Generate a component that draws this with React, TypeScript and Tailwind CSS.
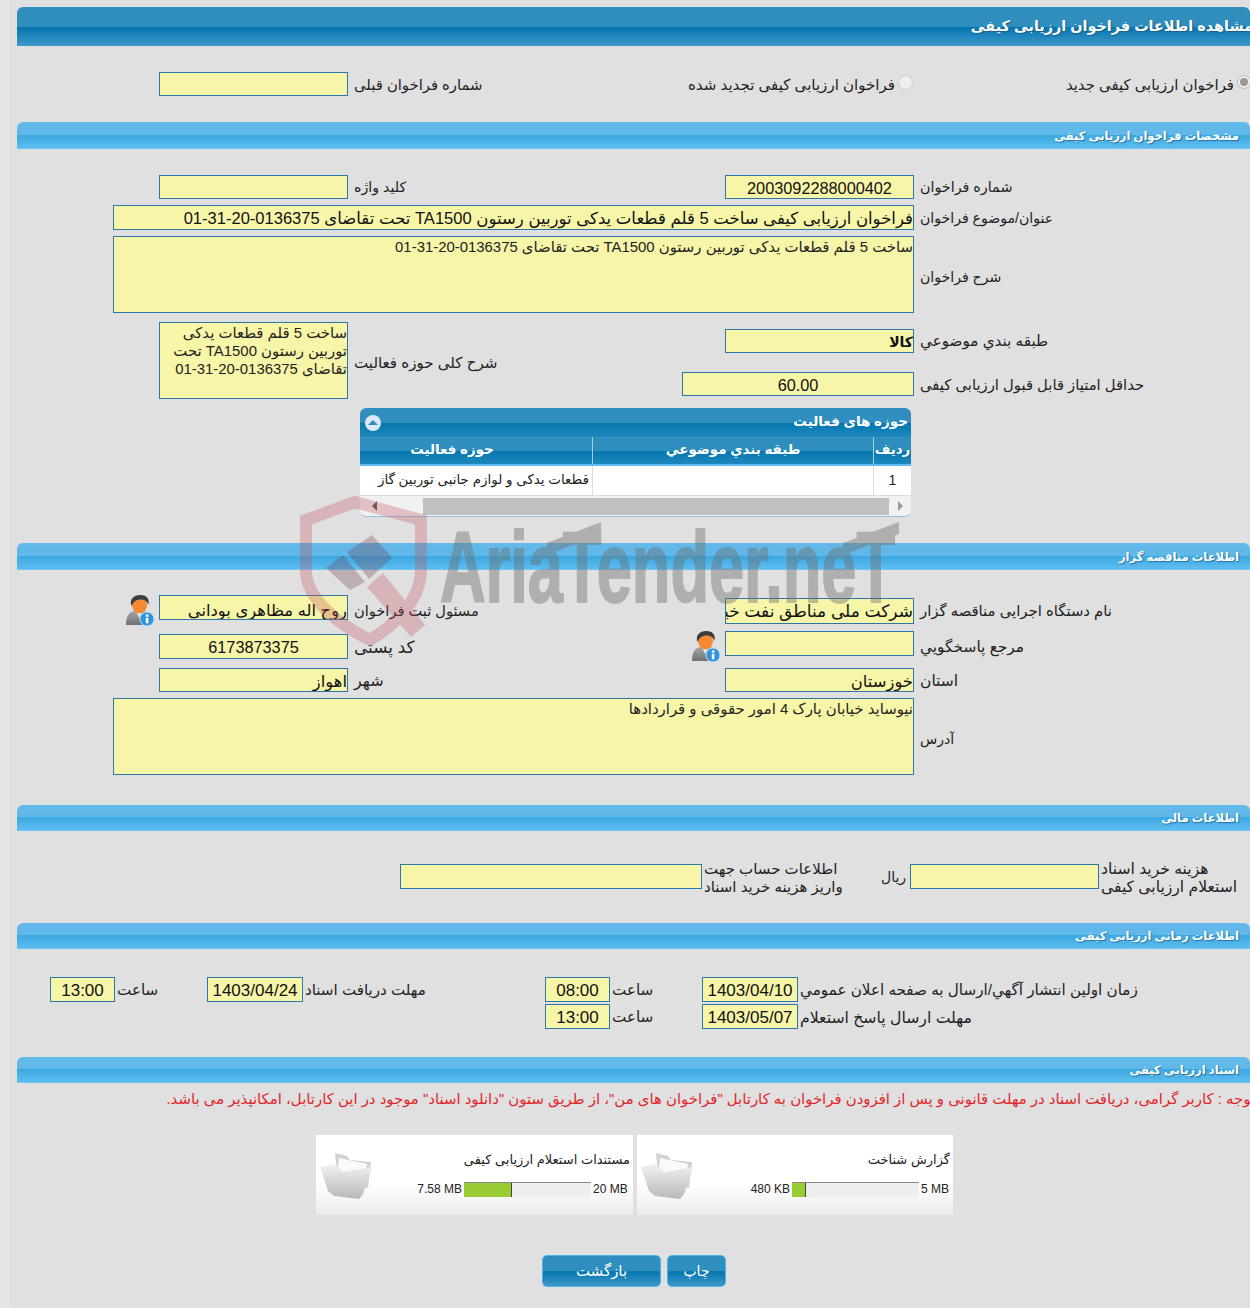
import React from "react";

const font = "font-['Liberation_Sans','DejaVu_Sans',sans-serif]";

function Bar({ title, className }: { title: string; className: string }) {
  return (
    <div
      dir="rtl"
      className={`ml-[17px] flex items-center rounded-t-[6px] bg-[linear-gradient(to_bottom,#63b9e9_0%,#60b8e8_48%,#3aa8e1_50%,#5fbdf0_100%)] border-b border-[#6fc6f2] pr-[11px] pt-[3px] text-[11.5px] font-bold text-white [text-shadow:1px_1px_1px_#27719c] ${className}`}
    >
      {title}
    </div>
  );
}

function Box({ className = "", children, center }: { className?: string; children?: React.ReactNode; center?: boolean }) {
  return (
    <div
      dir="rtl"
      className={`shrink-0 overflow-hidden whitespace-nowrap border border-[#2a77a8] bg-[#f7f5a8] leading-[24px] text-[#111] ${center ? "text-center" : "text-right"} ${className}`}
    >
      {children}
    </div>
  );
}

function Area({ className = "", children }: { className?: string; children?: React.ReactNode }) {
  return (
    <div
      dir="rtl"
      className={`shrink-0 overflow-hidden border border-[#2a77a8] bg-[#f7f5a8] pt-[1px] text-right text-[14.9px] leading-[18px] text-[#222] ${className}`}
    >
      {children}
    </div>
  );
}

function Lbl({ className = "", children }: { className?: string; children: React.ReactNode }) {
  return (
    <div dir="rtl" className={`shrink-0 whitespace-nowrap pt-[2px] text-left text-[#222] ${className}`}>
      {children}
    </div>
  );
}

function Person() {
  return (
    <svg width="30" height="31" viewBox="0 0 30 31" className="shrink-0">
      <defs>
        <linearGradient id="suit" x1="0" y1="0" x2="0" y2="1">
          <stop offset="0" stopColor="#a5a7a9" />
          <stop offset="1" stopColor="#6f7173" />
        </linearGradient>
      </defs>
      <path d="M0 30c0-9 3-13 8-14h10c5 1 8 5 8 14z" fill="url(#suit)" />
      <path d="M10 16l3 7 4-7z" fill="#ececec" />
      <ellipse cx="13.5" cy="10" rx="7.5" ry="8.5" fill="#f58a32" />
      <path d="M5.500 11C3 4 8 0 14 0s10 3 8.500 10c-1.500-4-4-5.500-8-5.500-4 0-7 2-9 6.500z" fill="#3a3d40" />
      <circle cx="21" cy="24" r="7" fill="#2f93dd" stroke="#bfe0f8" />
      <rect x="19.800" y="22.800" width="2.600" height="5.500" fill="#fff" />
      <rect x="19.800" y="19.400" width="2.600" height="2.400" fill="#fff" />
    </svg>
  );
}

function Folder({ id }: { id: string }) {
  return (
    <svg width="54" height="48" viewBox="0 0 54 48" className="shrink-0">
      <defs>
        <linearGradient id={id} x1="0" y1="0" x2="0" y2="1">
          <stop offset="0" stopColor="#f2f2f2" />
          <stop offset="1" stopColor="#b8b8b8" />
        </linearGradient>
      </defs>
      <path d="M16 1l12 3 3 4 21 2-3 26-30-5z" fill="#d2d2d2" />
      <path d="M20 6l28 6-3 21-27-6z" fill="#fafafa" />
      <path d="M1 15l15-3 8 8 18-3 11-2-9 27-4 5-25-3-6-5z" fill={`url(#${id})`} />
    </svg>
  );
}

function Card({ id, title, used, max, pct, className, maxW }: { id: string; title: string; used: string; max: string; pct: string; className: string; maxW: string }) {
  return (
    <div className={`flex h-[80px] shrink-0 items-center bg-[linear-gradient(to_bottom,#ffffff_60%,#ececec_100%)] ${className}`}>
      <div className="ml-[3px] mt-[2px]">
        <Folder id={id} />
      </div>
      <div className="ml-[2px] mb-[4px] flex flex-1 flex-col">
        <div dir="rtl" className="pr-[3px] pt-[1px] text-[13px] leading-[18px] text-[#222]">
          {title}
        </div>
        <div className="mt-[13px] flex h-[15px] items-center text-[12px] text-[#222]">
          <div className="flex-1 whitespace-nowrap pr-[2px] text-right">{used}</div>
          <div className="h-[15px] w-[127px] shrink-0 border-t border-[#888] bg-[#eeeeee]">
            <div className={`h-full border-r border-[#444] bg-[#99cc33] ${pct}`} />
          </div>
          <div className={`shrink-0 whitespace-nowrap pl-[2px] ${maxW}`}>{max}</div>
        </div>
      </div>
    </div>
  );
}

function Watermark() {
  return (
    <svg width="620" height="150" viewBox="0 0 620 150" className="pointer-events-none absolute left-[295px] top-[495px]">
      <g opacity="0.3">
        <path
          d="M11 25L60 7l66 18v50c0 30-26 55-51 70C45 130 11 105 11 75z"
          fill="none"
          stroke="#c0505a"
          strokeWidth="12"
        />
        <path d="M31 73l17-13 22 27-15 8z" fill="#6f3c50" />
        <path d="M52 57l25-17 20 23-23 21z" fill="#6f3c50" />
        <path d="M72 92l16-14 42 52-14 12z" fill="#c0505a" />
      </g>
      <g opacity="0.42" fill="#6e6e6e" stroke="#6e6e6e">
        <text
          x="145"
          y="107"
          fontFamily="Liberation Sans, sans-serif"
          fontWeight="700"
          fontSize="100"
          strokeWidth="2"
          textLength="455"
          lengthAdjust="spacingAndGlyphs"
        >
          AriaTender.neT
        </text>
        <path d="M252 48l54-21v12l-54 21z" strokeWidth="0" />
        <path d="M548 48l56-21v12l-56 21z" strokeWidth="0" />
      </g>
    </svg>
  );
}

const headGrad =
  "bg-[linear-gradient(to_bottom,#318fbf_0%,#2e8ebe_50%,#0476b0_52%,#1f88bc_100%)]";
const titleGrad =
  "bg-[linear-gradient(to_bottom,#318fbf_0%,#2e8ebe_50%,#0476b0_52%,#3e98c8_100%)]";

export default function App() {
  return (
    <div className={`relative h-[1308px] w-[1250px] overflow-hidden bg-[linear-gradient(to_right,#e5e5e5_10px,#e0e0e0_10px)] pt-[7px] ${font}`}>
      <div
        dir="rtl"
        className={`ml-[17px] flex h-[39px] items-center overflow-hidden rounded-t-[6px] ${titleGrad} text-[14.4px] font-bold text-white [text-shadow:1px_1px_1px_#1c5f86]`}
      >
        <span className="mr-[-3px] whitespace-nowrap">مشاهده اطلاعات فراخوان ارزیابی کیفی</span>
      </div>

      <div className="mt-[26px] flex h-[24px] items-center">
        <Box className="ml-[159px] h-[24px] w-[189px]" />
        <Lbl className="ml-[6px] w-[334px] text-[14.8px]">شماره فراخوان قبلی</Lbl>
        <Lbl className="w-[207px] text-[15.05px]">فراخوان ارزیابی کیفی تجدید شده</Lbl>
        <div className="ml-[3px] mb-[4px] h-[15px] w-[15px] shrink-0 rounded-full border border-[#ccc] bg-[#eee]" />
        <Lbl className="ml-[153px] w-[168px] text-[14.9px]">فراخوان ارزیابی کیفی جدید</Lbl>
        <div className="ml-[3px] mb-[4px] flex h-[14px] w-[14px] shrink-0 items-center justify-center rounded-full border border-[#bbb] bg-[#eee]">
          <div className="h-[8px] w-[8px] rounded-full bg-[#999]" />
        </div>
      </div>

      <Bar title="مشخصات فراخوان ارزیابی کیفی" className="mt-[26px] h-[27px]" />

      <div className="mt-[26px] flex h-[24px] items-center">
        <Box className="ml-[159px] h-[24px] w-[189px]" />
        <Lbl className="ml-[6px] w-[371px] text-[14.2px]">کلید واژه</Lbl>
        <Box center className="h-[24px] w-[189px] text-[16.3px]">2003092288000402</Box>
        <Lbl className="ml-[6px] text-[14.3px]">شماره فراخوان</Lbl>
      </div>
      <div className="mt-[6px] flex h-[25px] items-center">
        <Box className="ml-[113px] h-[25px] w-[801px] pt-[1px] text-[16.55px]">
          فراخوان ارزیابی کیفی ساخت 5 قلم قطعات یدکی توربین رستون TA1500 تحت تقاضای 0136375-20-31-01
        </Box>
        <Lbl className="ml-[6px] text-[14.1px]">عنوان/موضوع فراخوان</Lbl>
      </div>
      <div className="mt-[6px] flex h-[77px] items-center">
        <Area className="ml-[113px] h-[77px] w-[801px]">
          ساخت 5 قلم قطعات یدکی توربین رستون TA1500 تحت تقاضای 0136375-20-31-01
        </Area>
        <Lbl className="ml-[6px] mt-[4px] text-[14.1px]">شرح فراخوان</Lbl>
      </div>
      <div className="mt-[9px] flex h-[77px] items-start">
        <Area className="ml-[159px] h-[77px] w-[189px]">
          ساخت 5 قلم قطعات یدکی توربین رستون TA1500 تحت تقاضای 0136375-20-31-01
        </Area>
        <Lbl className="ml-[6px] mt-[28px] w-[328px] text-[15.1px]">شرح کلی حوزه فعالیت</Lbl>
        <div className="flex flex-col">
          <div className="mt-[7px] flex h-[24px] items-center">
            <div className="w-[43px] shrink-0" />
            <Box className="h-[24px] w-[189px] text-[14px] font-bold">کالا</Box>
            <Lbl className="ml-[6px] mb-[2px] text-[15.2px]">طبقه بندي موضوعي</Lbl>
          </div>
          <div className="mt-[19px] flex h-[24px] items-center">
            <Box center className="h-[24px] w-[232px] text-[16.3px]">60.00</Box>
            <Lbl className="ml-[6px] text-[14.8px]">حداقل امتیاز قابل قبول ارزیابی کیفی</Lbl>
          </div>
        </div>
      </div>

      <div dir="rtl" className="ml-[360px] mt-[9px] h-[109px] w-[551px] overflow-hidden rounded-[6px] border-b border-[#8fc3e6] bg-[#f1f1f1]">
        <div className={`flex h-[29px] items-center justify-between ${headGrad} px-[3px] text-[13.5px] font-bold text-white`}>
          <span>حوزه های فعالیت</span>
          <span className="ml-[2px] flex h-[16px] w-[16px] items-center justify-center rounded-full bg-[#dbe9f4]">
            <span className="h-0 w-0 border-x-[5px] border-b-[5px] border-x-transparent border-b-[#2e8ebe]" />
          </span>
        </div>
        <div className={`grid h-[29px] grid-cols-[38px_281px_1fr] border-b-[2px] border-[#5fbdf0] ${headGrad} text-[13.4px] font-bold text-white`}>
          <div className="flex items-center justify-center border-l border-[#9fd0ea]">ردیف</div>
          <div className="flex items-center justify-center border-l border-[#9fd0ea]">طبقه بندي موضوعي</div>
          <div className="flex items-center justify-center pr-[48px]">حوزه فعالیت</div>
        </div>
        <div className="grid h-[30px] grid-cols-[38px_281px_1fr] border-b border-[#ddd] bg-white text-[13.45px] text-[#222]">
          <div className="flex items-center justify-center border-l border-[#ddd] text-[14px]">1</div>
          <div className="border-l border-[#ddd]" />
          <div className="flex items-center whitespace-nowrap pr-[3px]">قطعات یدکی و لوازم جانبی توربین گاز</div>
        </div>
        <div className="flex h-[20px] items-center">
          <div className="flex w-[22px] justify-center">
            <span className="h-0 w-0 border-y-[5px] border-l-[5px] border-y-transparent border-l-[#999]" />
          </div>
          <div className="h-[17px] w-[466px] bg-[#c0c0c0]" />
          <div className="flex flex-1 justify-start pr-[46px]">
            <span className="h-0 w-0 border-y-[5px] border-r-[5px] border-y-transparent border-r-[#555]" />
          </div>
        </div>
      </div>

      <Bar title="اطلاعات مناقصه گزار" className="mt-[26px] h-[27px]" />

      <div className="mt-[25px] flex h-[29px] items-start">
        <div className="ml-[126px] w-[33px] shrink-0">
          <Person />
        </div>
        <Box className="h-[25px] w-[189px] pt-[2px] text-[16.4px]">روح اله مظاهری بودانی</Box>
        <Lbl className="ml-[6px] mt-[4px] w-[371px] text-[14.6px]">مسئول ثبت فراخوان</Lbl>
        <Box className="mt-[3px] h-[26px] w-[189px] text-[16.4px]">
          <span className="text-[17px]">شرکت ملی مناطق نفت خیز جنوب</span>
        </Box>
        <Lbl className="ml-[6px] mt-[3px] text-[14.85px]">نام دستگاه اجرایی مناقصه گزار</Lbl>
      </div>
      <div className="mt-[7px] flex h-[29px] items-start">
        <Box center className="ml-[159px] mt-[3px] h-[25px] w-[189px] text-[16.3px]">6173873375</Box>
        <Lbl className="ml-[6px] mt-[2px] w-[338px] text-[16.9px]">کد پستی</Lbl>
        <div className="w-[33px] shrink-0">
          <Person />
        </div>
        <Box className="h-[25px] w-[189px]" />
        <Lbl className="ml-[6px] mt-[2px] text-[15.4px]">مرجع پاسخگویي</Lbl>
      </div>
      <div className="mt-[8px] flex h-[24px] items-center">
        <Box className="ml-[159px] h-[24px] w-[189px] text-[16.4px]">اهواز</Box>
        <Lbl className="ml-[6px] w-[371px] text-[16px]">شهر</Lbl>
        <Box className="h-[24px] w-[189px] text-[16.4px]">خوزستان</Box>
        <Lbl className="ml-[6px] text-[15.5px]">استان</Lbl>
      </div>
      <div className="mt-[6px] flex h-[77px] items-center">
        <Area className="ml-[113px] h-[77px] w-[801px]">نیوساید خیابان پارک 4 امور حقوقی و قراردادها</Area>
        <Lbl className="ml-[6px] mt-[4px] text-[14.1px]">آدرس</Lbl>
      </div>

      <Bar title="اطلاعات مالی" className="mt-[30px] h-[26px]" />

      <div className="mt-[33px] flex h-[25px] items-center">
        <Box className="ml-[400px] h-[25px] w-[302px]" />
        <Lbl className="ml-[2px] w-[177px] text-[15px] leading-[18px]">
          اطلاعات حساب جهت
          <br />
          واریز هزینه خرید اسناد
        </Lbl>
        <Lbl className="w-[29px] text-[14px]">ریال</Lbl>
        <Box className="h-[25px] w-[189px]" />
        <Lbl className="ml-[2px] text-[15.6px] leading-[18px]">
          هزینه خرید اسناد
          <br />
          استعلام ارزیابی کیفی
        </Lbl>
      </div>

      <Bar title="اطلاعات زمانی ارزیابی کیفی" className="mt-[34px] h-[26px]" />

      <div className="mt-[28px] flex h-[25px] items-center">
        <Box center className="ml-[50px] h-[25px] w-[65px] pt-[1px] text-[17px]">13:00</Box>
        <Lbl className="ml-[2px] w-[90px] text-[15.2px]">ساعت</Lbl>
        <Box center className="h-[25px] w-[96px] pt-[1px] text-[17px]">1403/04/24</Box>
        <Lbl className="ml-[2px] w-[240px] text-[15.1px]">مهلت دریافت اسناد</Lbl>
        <Box center className="h-[25px] w-[65px] pt-[1px] text-[17px]">08:00</Box>
        <Lbl className="ml-[2px] w-[90px] text-[15.2px]">ساعت</Lbl>
        <Box center className="h-[25px] w-[96px] pt-[1px] text-[17px]">1403/04/10</Box>
        <Lbl className="ml-[2px] text-[15.2px]">زمان اولین انتشار آگهي/ارسال به صفحه اعلان عمومي</Lbl>
      </div>
      <div className="mt-[2px] flex h-[25px] items-center">
        <Box center className="ml-[545px] h-[25px] w-[65px] pt-[1px] text-[17px]">13:00</Box>
        <Lbl className="ml-[2px] w-[90px] text-[15.2px]">ساعت</Lbl>
        <Box center className="h-[25px] w-[96px] pt-[1px] text-[17px]">1403/05/07</Box>
        <Lbl className="ml-[2px] text-[15.7px]">مهلت ارسال پاسخ استعلام</Lbl>
      </div>

      <Bar title="اسناد ارزیابی کیفی" className="mt-[28px] h-[26px]" />

      <div dir="rtl" className="mt-[4px] h-[24px] whitespace-nowrap text-[14.9px] leading-[24px] text-[#e0262b]">
        <span className="mr-[-5px]">
          توجه : کاربر گرامی، دریافت اسناد در مهلت قانونی و پس از افزودن فراخوان به کارتابل "فراخوان های من"، از طریق ستون "دانلود اسناد" موجود در این کارتابل، امکانپذیر می باشد.
        </span>
      </div>

      <div className="ml-[316px] mt-[24px] flex h-[80px] gap-[4px]">
        <Card id="f1" className="w-[317px]" maxW="w-[42px]" title="مستندات استعلام ارزیابی کیفی" used="7.58 MB" max="20 MB" pct="w-[38%]" />
        <Card id="f2" className="w-[316px]" maxW="w-[34px]" title="گزارش شناخت" used="480 KB" max="5 MB" pct="w-[11%]" />
      </div>

      <div className="ml-[542px] mt-[40px] flex h-[32px] gap-[6px]">
        <button className={`h-[32px] w-[119px] rounded-[5px] border border-[#4db4e6] ${titleGrad} pt-[1px] text-[15px] text-white`}>
          بازگشت
        </button>
        <button className={`h-[32px] w-[59px] rounded-[5px] border border-[#4db4e6] ${titleGrad} pt-[1px] text-[14px] text-white`}>
          چاپ
        </button>
      </div>

      <Watermark />
    </div>
  );
}
